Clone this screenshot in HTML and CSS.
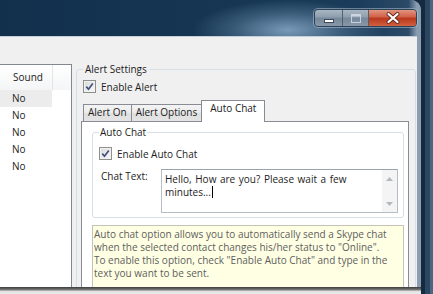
FILE: index.html
```html
<!DOCTYPE html>
<html>
<head>
<meta charset="utf-8">
<link rel="stylesheet" href="styles.css">
</head>
<body>
<div class="screen">
  <div class="window">
    <div class="titlebar">
      <div class="caption">
        <span class="cbtn min"><svg width="10" height="4" viewBox="0 0 10 4"><rect x="0.5" y="0.5" width="9" height="3" fill="#fff" stroke="#3a4a5c" stroke-width="1"/></svg></span>
        <span class="cbtn max"><svg width="10" height="9" viewBox="0 0 10 9"><rect x="0.5" y="0.5" width="9" height="8" fill="none" stroke="#dfe6ed" stroke-width="1" opacity="0.75"/><rect x="1" y="1" width="8" height="1.5" fill="#dfe6ed" opacity="0.75"/></svg></span>
        <span class="cbtn close"><svg width="14" height="12" viewBox="0 0 14 12"><path d="M2.5 2 L11.5 10 M11.5 2 L2.5 10" stroke="#6a2a1c" stroke-width="4" stroke-linecap="round"/><path d="M2.5 2 L11.5 10 M11.5 2 L2.5 10" stroke="#fff" stroke-width="2.2" stroke-linecap="round"/></svg></span>
      </div>
    </div>
    <div class="client">
      <div class="list">
        <div class="list-header"><span class="col-sound">Sound</span><span class="col-rest"></span></div>
        <div class="row sel">No</div>
        <div class="row">No</div>
        <div class="row">No</div>
        <div class="row">No</div>
        <div class="row">No</div>
      </div>
      <fieldset class="group alert-settings">
        <legend>Alert Settings</legend>
        <label class="check"><span class="box"><svg width="9" height="9" viewBox="0 0 9 9"><path d="M1.3 4.6 L3.5 7.2 L7.8 1.6" fill="none" stroke="#3f507d" stroke-width="1.7"/></svg></span>Enable Alert</label>
        <div class="tabs">
          <div class="tab-strip">
            <span class="tab">Alert On</span>
            <span class="tab">Alert Options</span>
            <span class="tab active">Auto Chat</span>
          </div>
          <div class="tab-panel">
            <fieldset class="group autochat">
              <legend>Auto Chat</legend>
              <label class="check"><span class="box"><svg width="9" height="9" viewBox="0 0 9 9"><path d="M1.3 4.6 L3.5 7.2 L7.8 1.6" fill="none" stroke="#3f507d" stroke-width="1.7"/></svg></span>Enable Auto Chat</label>
              <div class="chat-row">
                <span class="chat-label">Chat Text:</span>
                <div class="textbox">
                  <div class="text">Hello, How are you? Please wait a few minutes...<span class="caret"></span></div>
                  <div class="scroll">
                    <span class="sbtn"><svg width="7" height="4" viewBox="0 0 7 4"><path d="M0 4 L3.5 0 L7 4 Z" fill="#b4b8be"/></svg></span>
                    <span class="sbtn"><svg width="7" height="4" viewBox="0 0 7 4"><path d="M0 0 L3.5 4 L7 0 Z" fill="#b4b8be"/></svg></span>
                  </div>
                </div>
              </div>
            </fieldset>
            <div class="tip">Auto chat option allows you to automatically send a Skype chat<br>when the selected contact changes his/her status to "Online".<br>To enable this option, check "Enable Auto Chat" and type in the<br>text you want to be sent.</div>
          </div>
        </div>
      </fieldset>
    </div>
  </div>
  <div class="desktop"></div>
  <div class="bottom-edge"></div>
</div>
</body>
</html>
```

FILE: styles.css
```css
* { box-sizing: border-box; }
html, body { margin: 0; padding: 0; }
body {
  width: 433px;
  height: 294px;
  overflow: hidden;
  font-family: "Open Sans", "Noto Sans", sans-serif;
  font-size: 10px;
  color: #1c1c1c;
  background: #142b42;
}
.screen {
  display: grid;
  grid-template-columns: 421px 12px;
  grid-template-rows: 287px 7px;
  width: 433px;
  height: 294px;
}
.window {
  grid-column: 1;
  grid-row: 1;
  display: flex;
  flex-direction: column;
  background: #8b9daf;
  border-top-right-radius: 10px;
  overflow: hidden;
}
.titlebar {
  height: 36px;
  flex: none;
  display: flex;
  justify-content: flex-end;
  align-items: flex-start;
  padding: 9px 4px 0 0;
  background:
    radial-gradient(ellipse 95px 30px at 288px 30px, rgba(125, 160, 190, 0.95), rgba(125, 160, 190, 0.35) 55%, rgba(125, 160, 190, 0) 100%),
    linear-gradient(90deg, #12304c 0%, #163653 55%, #1b3c5a 85%, #2a4a68 97%, #8a9db0 99%);
}
.caption {
  display: flex;
  height: 18px;
  border: 1px solid #2e4256;
  border-radius: 4px;
  box-shadow: 0 0 0 1px rgba(200, 215, 230, 0.45);
  overflow: hidden;
}
.cbtn {
  display: flex;
  align-items: center;
  justify-content: center;
}
.cbtn.min, .cbtn.max {
  background: linear-gradient(#a9b7c4 0%, #8e9dac 45%, #75879a 50%, #8798a9 100%);
  border-right: 1px solid #4d5f71;
}
.cbtn.min { width: 28px; padding-top: 5px; }
.cbtn.max { width: 26px; }
.cbtn.close {
  width: 47px;
  background: linear-gradient(#e39580 0%, #cf5e45 45%, #b9361d 50%, #d2603f 100%);
}
.client {
  flex: 1;
  margin-right: 4px;
  background: #f0f0f0;
  border-top: 1px solid #c4cfd9;
  display: flex;
  align-items: flex-start;
  padding-top: 26px;
  overflow: hidden;
}
.desktop {
  grid-column: 2;
  grid-row: 1 / span 2;
  background: linear-gradient(90deg, #132a40 0, #132a40 4px, #2c4660 4px, #2c4660 9px, #4a6680 9px);
}
.bottom-edge {
  grid-column: 1;
  grid-row: 2;
  background: linear-gradient(#3c3c3c, #7d7d7d 3px, #dedede 4px, #eeeeee);
}

/* list */
.list {
  width: 72px;
  height: 260px;
  flex: none;
  margin-top: 1px;
  background: #fff;
  border-top: 1px solid #828790;
  border-right: 1px solid #828790;
}
.list-header {
  display: flex;
  height: 25px;
  background: linear-gradient(#ffffff, #f4f5f6);
}
.col-sound {
  width: 53px;
  border-right: 1px solid #e2e4e7;
  padding-left: 13px;
  line-height: 25px;
}
.row {
  width: 52px;
  height: 17px;
  line-height: 17px;
  padding-left: 12px;
}
.row.sel { background: #ececec; }

/* group boxes */
.group {
  margin: 0;
  border: 1px solid #d5dfe5;
  border-radius: 3px;
  min-width: 0;
}
.group > legend { line-height: 13px; }
.alert-settings {
  width: 340px;
  height: 300px;
  margin-left: 4px;
  padding: 0 6px 0 4px;
}
.alert-settings > legend { margin-left: 2px; padding: 0 2px; }

.check {
  display: flex;
  align-items: center;
  gap: 5px;
  height: 13px;
}
.alert-settings > .check { margin: 4px 0 0 2px; }
.box {
  width: 13px;
  height: 13px;
  flex: none;
  display: flex;
  align-items: center;
  justify-content: center;
  border: 1px solid #8f8f8f;
  background: linear-gradient(135deg, #d8d8d8, #fafafa);
  box-shadow: inset 0 0 0 1px #f2f2f2;
}

/* tabs */
.tabs { margin-top: 7px; }
.tab-strip {
  display: flex;
  align-items: flex-end;
  height: 21px;
  padding-left: 2px;
}
.tab {
  height: 17px;
  padding: 0 4px;
  line-height: 15px;
  border: 1px solid #898c95;
  border-bottom: none;
  background: linear-gradient(#f4f4f4, #ebebeb 50%, #dfdfdf 50%, #e4e4e4);
  margin-left: -1px;
}
.tab:first-child { margin-left: 0; }
.tab.active {
  height: 22px;
  padding: 0 8px;
  line-height: 14px;
  background: #fff;
  margin-bottom: -1px;
  position: relative;
  z-index: 1;
}
.tab-panel {
  height: 200px;
  border: 1px solid #898c95;
  background: #fff;
  padding: 4px 4px 0 10px;
}

/* auto chat group */
.autochat { padding: 0 5px 4px 6px; }
.autochat > legend { padding: 0 1px; }
.autochat > .check { margin-top: 8px; }
.chat-row {
  display: flex;
  margin-top: 9px;
}
.chat-label {
  width: 62px;
  flex: none;
  padding: 1px 0 0 2px;
  line-height: 13px;
}
.textbox {
  width: 237px;
  height: 44px;
  display: flex;
  border: 1px solid #b7bdc7;
  border-top-color: #9aa2ae;
}
.text {
  flex: 1;
  padding: 3px 3px 0 3px;
  line-height: 13px;
  word-spacing: 1px;
}
.caret {
  display: inline-block;
  width: 1px;
  height: 12px;
  margin-left: 1px;
  background: #000;
  vertical-align: -2px;
}
.scroll {
  width: 15px;
  flex: none;
  display: flex;
  flex-direction: column;
  justify-content: space-between;
  background: #f4f4f4;
}
.sbtn {
  height: 17px;
  display: flex;
  align-items: center;
  justify-content: center;
}

/* tip */
.tip {
  margin-top: 7px;
  height: 80px;
  padding: 2px 1px;
  line-height: 13px;
  white-space: nowrap;
  color: #5e5e5e;
  background: #ffffe4;
  border: 1px solid #c3c4b4;
}
```
